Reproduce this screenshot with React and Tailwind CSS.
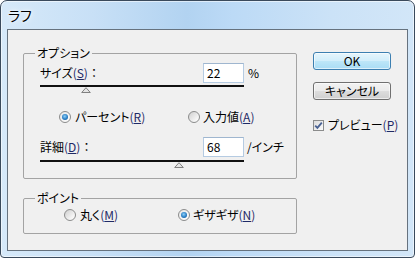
import React from "react";

const M = ({ c }) => (
  <span className="text-[#1f2a66]">
    (<u className="underline underline-offset-[1px] decoration-1">{c}</u>)
  </span>
);

const Colon = () => <span className="[font-feature-settings:normal]">：</span>;

function Radio({ checked }) {
  return (
    <span
      className={
        "w-[12px] h-[12px] rounded-full border border-[#8b8c8c] flex items-center justify-center shrink-0 " +
        (checked
          ? "bg-[linear-gradient(135deg,#e6e6e6,#ffffff)]"
          : "bg-[linear-gradient(135deg,#cfcfcf,#f4f4f4_70%,#ffffff)]")
      }
    >
      {checked && (
        <span className="w-[6px] h-[6px] rounded-full bg-[radial-gradient(circle_at_45%_40%,#8fd0f7_0%,#2a7fc6_55%,#0b4a88_100%)]" />
      )}
    </span>
  );
}

function Slider({ pos }) {
  return (
    <div className="relative w-[204px] h-[8px]">
      <div className="h-[2px] bg-[#111]" />
      <svg
        className="absolute top-[2px]"
        style={{ left: pos }}
        width="10"
        height="6"
        viewBox="0 0 10 6"
      >
        <path d="M5 0.7 L9.3 5.5 H0.7 Z" fill="#e4e4e4" stroke="#808080" strokeWidth="1" />
      </svg>
    </div>
  );
}

function TextBox({ value }) {
  return (
    <div className="w-[41px] h-[20px] border border-[#b5cbe2] border-t-[#9fb6cf] bg-white flex items-center pl-[3px] text-[12px] leading-[14px]">
      {value}
    </div>
  );
}

export default function App() {
  return (
    <div className="w-[415px] h-[258px] rounded-t-[7px] rounded-b-[4px] border border-[#3a4a5c] bg-[linear-gradient(90deg,#d6e9f9_0%,#c8e0f6_22%,#b2d3f1_45%,#bcdaf6_56%,#cbe2f7_80%,#d2e6f8_100%)] shadow-[inset_0_0_0_1px_rgba(255,255,255,0.55)] flex flex-col font-['Noto_Sans_CJK_JP','Noto_Sans',sans-serif] [font-feature-settings:'palt'] text-black">
      <div className="h-[28px] pl-[7px] pt-[5px] text-[14px] leading-[18px] [text-shadow:0_0_6px_#fff,0_0_3px_#fff]">
        ラフ
      </div>
      <div className="mx-[6px] h-[222px] border border-[#66727e] bg-[#f0f0f0] flex pl-[15px] pt-[16px] gap-[16px] text-[12px] leading-[14px]">
        <div className="w-[274px] flex flex-col">
          <fieldset className="w-[274px] h-[133px] border border-[#a3a3a3] rounded-[2px]">
            <legend className="ml-[11px] px-[2px] leading-[14px]">オプション</legend>
            <div className="pl-[16px] flex flex-col">
              <div className="mt-[3px] h-[20px] flex items-center">
                <div className="w-[163px] whitespace-nowrap">
                  サイズ<M c="S" />
                  <Colon />
                </div>
                <TextBox value="22" />
                <span className="ml-[4px]">%</span>
              </div>
              <div className="mt-[2px]">
                <Slider pos={41} />
              </div>
              <div className="mt-[17px] h-[14px] flex items-center pl-[19px]">
                <div className="w-[129px] flex items-center gap-[4px]">
                  <Radio checked />
                  <span>
                    パーセント<M c="R" />
                  </span>
                </div>
                <div className="flex items-center gap-[3px]">
                  <Radio />
                  <span>
                    入力値<M c="A" />
                  </span>
                </div>
              </div>
              <div className="mt-[13px] h-[20px] flex items-center">
                <div className="w-[163px] whitespace-nowrap">
                  詳細<M c="D" />
                  <Colon />
                </div>
                <TextBox value="68" />
                <span className="ml-[3px]">/インチ</span>
              </div>
              <div className="mt-[3px]">
                <Slider pos={134} />
              </div>
            </div>
          </fieldset>
          <fieldset className="mt-[12px] w-[274px] h-[43px] border border-[#a3a3a3] rounded-[2px]">
            <legend className="ml-[11px] px-[2px] leading-[14px]">ポイント</legend>
            <div className="mt-[3px] h-[14px] flex items-center pl-[40px]">
              <div className="w-[114px] flex items-center gap-[4px]">
                <Radio />
                <span>
                  丸く<M c="M" />
                </span>
              </div>
              <div className="flex items-center gap-[3px]">
                <Radio checked />
                <span>
                  ギザギザ<M c="N" />
                </span>
              </div>
            </div>
          </fieldset>
        </div>
        <div className="w-[86px] flex flex-col">
          <button className="mt-[6px] w-[78px] h-[18px] rounded-[3px] border border-[#3c7fb1] bg-[linear-gradient(180deg,#e6f5fc_0%,#d2eefb_48%,#bde6f8_52%,#a9dcf5_100%)] shadow-[inset_0_0_0_1px_rgba(255,255,255,0.6)] flex items-center justify-center text-[12px] leading-[14px]">
            OK
          </button>
          <button className="mt-[12px] w-[78px] h-[18px] rounded-[3px] border border-[#707070] bg-[linear-gradient(180deg,#f2f2f2_0%,#ebebeb_48%,#dddddd_52%,#cfcfcf_100%)] shadow-[inset_0_0_0_1px_rgba(255,255,255,0.6)] flex items-center justify-center text-[12px] leading-[14px]">
            キャンセル
          </button>
          <div className="mt-[18px] h-[14px] flex items-center gap-[4px] whitespace-nowrap">
            <span className="w-[11px] h-[11px] border border-[#8b8c8c] bg-[linear-gradient(135deg,#dcdcdc,#fbfbfb)] flex items-center justify-center shrink-0">
              <svg width="9" height="9" viewBox="0 0 9 9">
                <path d="M1.2 4.6 L3.4 6.9 L7.8 1.6" fill="none" stroke="#4a6293" strokeWidth="1.8" />
              </svg>
            </span>
            <span>
              プレビュー<M c="P" />
            </span>
          </div>
        </div>
      </div>
    </div>
  );
}
